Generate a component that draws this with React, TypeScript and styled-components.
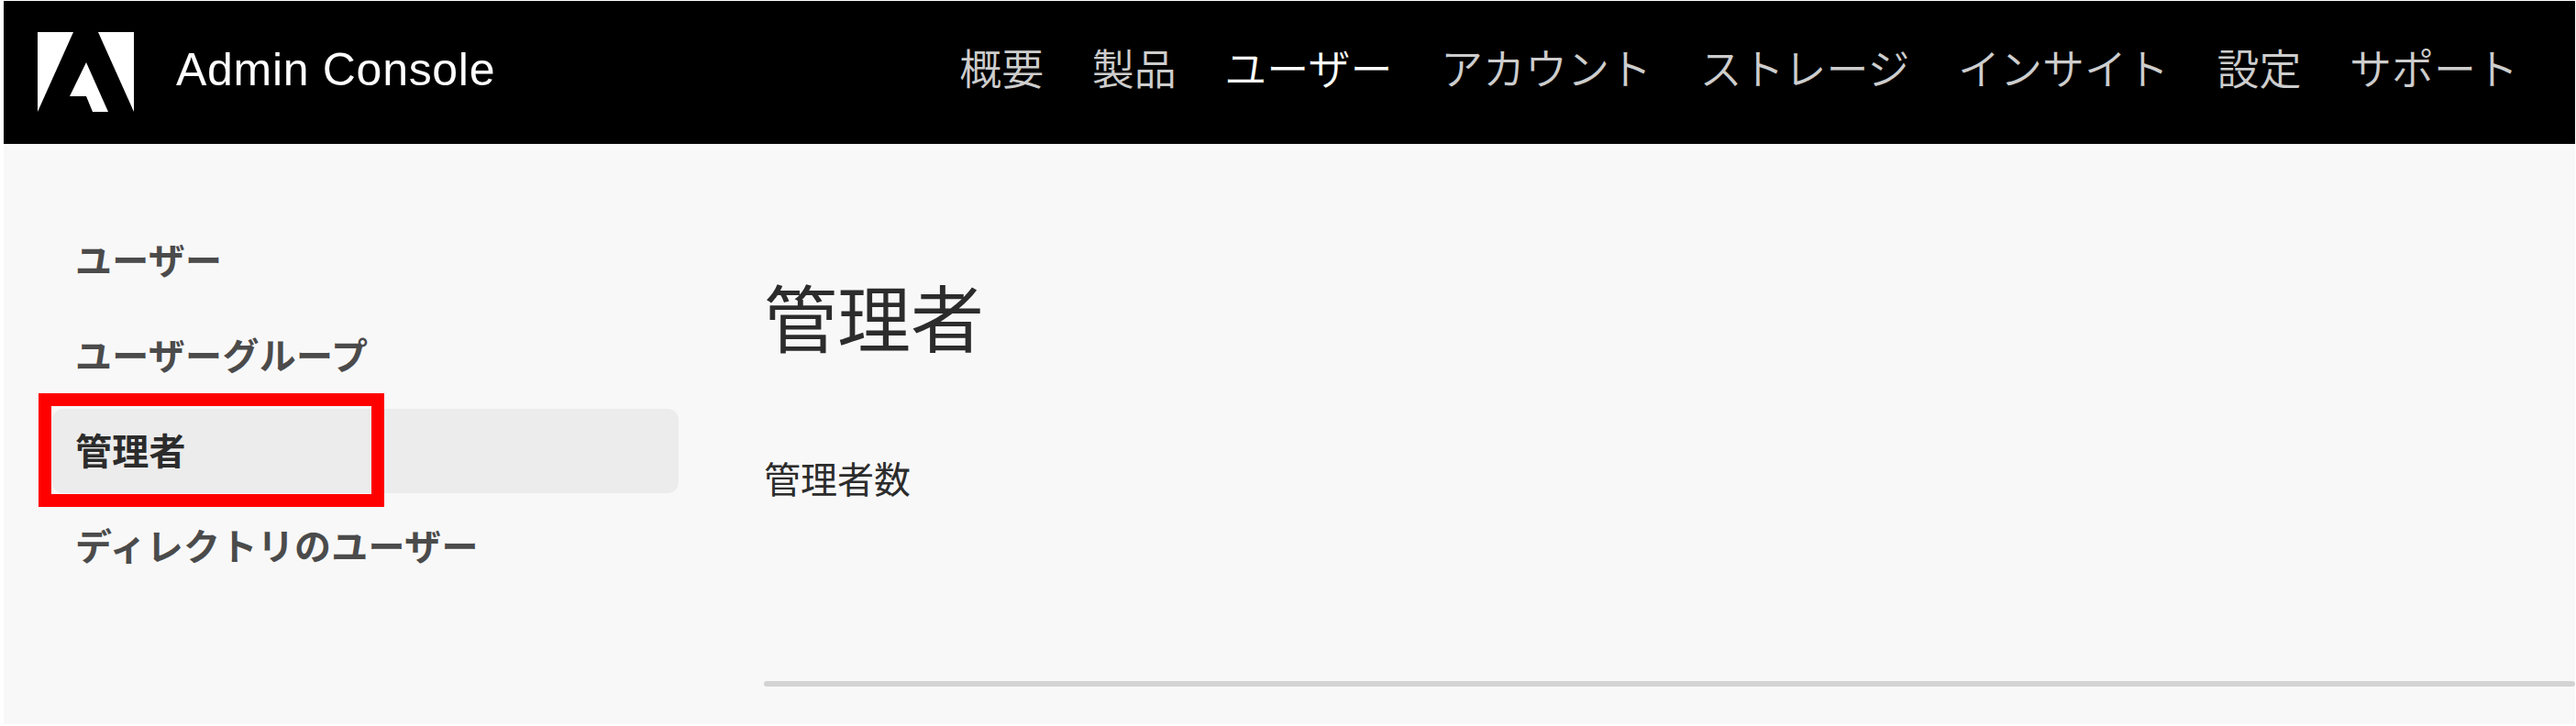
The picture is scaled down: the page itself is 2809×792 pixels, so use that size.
import React from "react";
import styled, { createGlobalStyle } from "styled-components";

const Global = createGlobalStyle`
  html, body { margin: 0; padding: 0; background: #ffffff; }
  body { font-family: "Liberation Sans", "Noto Sans CJK JP", sans-serif; }
`;

const Page = styled.div`
  width: 2809px;
  height: 792px;
  box-sizing: border-box;
  padding: 1px 1px 2px 4px;
  display: flex;
  flex-direction: column;
  overflow: hidden;
`;

const Header = styled.header`
  height: 156px;
  flex: none;
  box-sizing: border-box;
  background: #000000;
  display: flex;
  align-items: center;
  padding: 0 62px 0 37px;
`;

const Logo = styled.svg`
  width: 105px;
  height: 87px;
  flex: none;
  margin-top: -1px;
`;

const Product = styled.div`
  margin-left: 46px;
  padding-bottom: 6px;
  font-size: 50px;
  letter-spacing: 0.7px;
  line-height: 60px;
  color: #ffffff;
  white-space: nowrap;
`;

const TopNav = styled.nav`
  margin-left: auto;
  padding-bottom: 14px;
  display: flex;
  gap: 52.5px;
`;

const TopLink = styled.span<{ $active?: boolean }>`
  font-family: "Noto Sans CJK JP", sans-serif;
  font-size: 46px;
  line-height: 60px;
  font-weight: 350;
  color: ${(p) => (p.$active ? "#ffffff" : "#cdcdcd")};
  white-space: nowrap;
`;

const Body = styled.div`
  flex: 1;
  background: #f8f8f8;
  display: flex;
  border-top: 1px solid #f2f2f2;
`;

const Side = styled.aside`
  width: 736px;
  flex: none;
  box-sizing: border-box;
  padding: 80px 0 0 53px;
  display: flex;
  flex-direction: column;
  gap: 12px;
`;

const SideItem = styled.div<{ $active?: boolean }>`
  position: relative;
  height: 92px;
  box-sizing: border-box;
  padding: 0 0 5px 25px;
  display: flex;
  align-items: center;
  border-radius: 12px;
  font-family: "Noto Sans CJK JP", sans-serif;
  font-size: 40px;
  font-weight: 700;
  letter-spacing: 0.3px;
  color: ${(p) => (p.$active ? "#2c2c2c" : "#4b4b4b")};
  background: ${(p) => (p.$active ? "#ececec" : "transparent")};
`;

const Highlight = styled.div`
  position: absolute;
  left: -15px;
  top: -17px;
  width: 377px;
  height: 124px;
  box-sizing: border-box;
  border: 14px solid #ff0000;
`;

const Main = styled.main`
  flex: 1;
  margin-left: 93px;
  display: flex;
  flex-direction: column;
`;

const Title = styled.h1`
  margin: 135px 0 0;
  font-family: "Noto Sans CJK JP", sans-serif;
  font-size: 80px;
  line-height: 100px;
  font-weight: 400;
  color: #2c2c2c;
`;

const Count = styled.div`
  margin-top: 98px;
  font-family: "Noto Sans CJK JP", sans-serif;
  font-size: 40px;
  line-height: 60px;
  color: #2c2c2c;
`;

const Divider = styled.div`
  margin-top: 192px;
  height: 6px;
  border-radius: 3px;
  background: #d3d3d3;
`;

const topLinks = ["概要", "製品", "ユーザー", "アカウント", "ストレージ", "インサイト", "設定", "サポート"];
const sideLinks = ["ユーザー", "ユーザーグループ", "管理者", "ディレクトリのユーザー"];

export default function App() {
  return (
    <Page>
      <Global />
      <Header>
        <Logo viewBox="0 0 105 87" aria-label="Adobe">
          <polygon points="0,0 39,0 0,87" fill="#fff" />
          <polygon points="66,0 105,0 105,87" fill="#fff" />
          <polygon points="53,33 77,87 60,87 53,70 35,70" fill="#fff" />
        </Logo>
        <Product>Admin Console</Product>
        <TopNav>
          {topLinks.map((l) => (
            <TopLink key={l} $active={l === "ユーザー"}>{l}</TopLink>
          ))}
        </TopNav>
      </Header>
      <Body>
        <Side>
          {sideLinks.map((l) => (
            <SideItem key={l} $active={l === "管理者"}>
              {l}
              {l === "管理者" && <Highlight />}
            </SideItem>
          ))}
        </Side>
        <Main>
          <Title>管理者</Title>
          <Count>管理者数</Count>
          <Divider />
        </Main>
      </Body>
    </Page>
  );
}
